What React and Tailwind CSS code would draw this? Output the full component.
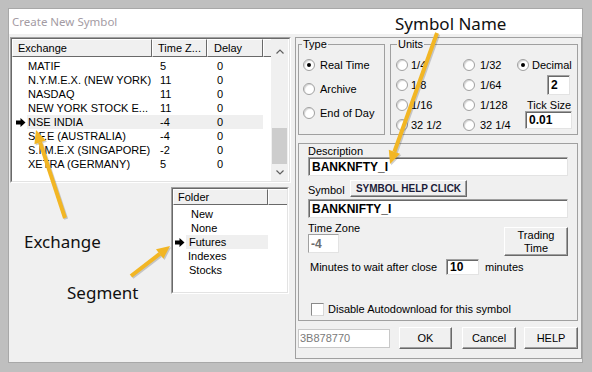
import React from 'react';

const exchanges = [
  ['MATIF', '5', '0'],
  ['N.Y.M.E.X. (NEW YORK)', '11', '0'],
  ['NASDAQ', '11', '0'],
  ['NEW YORK STOCK E...', '11', '0'],
  ['NSE INDIA', '-4', '0', true],
  ['S.F.E (AUSTRALIA)', '-4', '0'],
  ['S.I.M.E.X (SINGAPORE)', '-2', '0'],
  ['XETRA (GERMANY)', '5', '0'],
];

const folders = [
  ['New', 5],
  ['None', 5],
  ['Futures', 3, true],
  ['Indexes', 2],
  ['Stocks', 3],
];

function RowArrow() {
  return (
    <svg width="10" height="9" viewBox="0 0 10 9">
      <path d="M0 2.5 H4.5 V0 L9.5 4.5 L4.5 9 V6.5 H0 Z" fill="#000" />
    </svg>
  );
}

function Chevron({ down }) {
  return (
    <svg width="8" height="5" viewBox="0 0 8 5">
      <path d={down ? 'M0.5 0.5 L4 4 L7.5 0.5' : 'M0.5 4.5 L4 1 L7.5 4.5'} fill="none" stroke="#606060" strokeWidth="1.2" />
    </svg>
  );
}

function Radio({ on }) {
  return (
    <span className="w-[12px] h-[12px] rounded-full border border-[#a0a0a0] bg-white shadow-[inset_1px_1px_1px_#d4d4d4] flex items-center justify-center shrink-0">
      {on && <span className="w-[4px] h-[4px] rounded-full bg-black" />}
    </span>
  );
}

function RadioItem({ on, label, gap = 'gap-[5px]' }) {
  return (
    <div className={`flex items-center h-[16px] ${gap}`}>
      <Radio on={on} />
      <span className="leading-[13px] whitespace-nowrap">{label}</span>
    </div>
  );
}

function Button({ children, className = '' }) {
  return (
    <div className={`flex items-center justify-center bg-[#f0f0f0] border border-t-white border-l-white border-r-[#696969] border-b-[#696969] shadow-[inset_-1px_-1px_0_#a0a0a0] ${className}`}>
      {children}
    </div>
  );
}

function Field({ children, className = '' }) {
  return (
    <div className={`flex items-center bg-white border border-t-[#a0a0a0] border-l-[#a0a0a0] border-r-[#e3e3e3] border-b-[#e3e3e3] shadow-[inset_1px_1px_0_#696969] ${className}`}>
      {children}
    </div>
  );
}

function Arrow({ tail, base, head }) {
  const pts = head.map((p) => p.join(',')).join(' ');
  return (
    <g>
      <g transform="translate(1.2,1.2)" opacity="0.25">
        <line x1={tail[0]} y1={tail[1]} x2={base[0]} y2={base[1]} stroke="#444" strokeWidth="4" />
        <polygon points={pts} fill="#444" />
      </g>
      <line x1={tail[0]} y1={tail[1]} x2={base[0]} y2={base[1]} stroke="#f2b624" strokeWidth="4" />
      <polygon points={pts} fill="#f2b624" />
    </g>
  );
}

export default function App() {
  return (
    <div className="relative w-[592px] h-[372px] bg-[#bfbfbf] pl-[8px] pt-[8px] overflow-hidden text-[11px] text-black font-['Liberation_Sans',Arial,sans-serif]">
      <div className="w-[575px] h-[355px] bg-[#f0f0f0] border border-[#a8a8a8] flex flex-col">
        {/* title */}
        <div className="h-[25px] bg-white flex items-center pl-[3px] shrink-0">
          <span className="text-[11.5px] text-[#a39ba3] font-['Noto_Sans',sans-serif]">Create New Symbol</span>
        </div>

        <div className="flex flex-1">
          {/* left side */}
          <div className="w-[286px] flex flex-col">
            {/* exchange list */}
            <div className="ml-[1px] mt-[3px] w-[281px] h-[146px] border border-t-[#a0a0a0] border-l-[#a0a0a0] border-r-white border-b-white">
              <div className="w-full h-full border border-t-[#696969] border-l-[#696969] border-r-[#e3e3e3] border-b-[#e3e3e3] bg-white flex">
                <div className="w-[259px] flex flex-col">
                  <div className="flex h-[18px] shrink-0">
                    <div className="w-[140px] bg-[#f0f0f0] border-t border-l border-t-white border-l-white border-r border-b border-r-[#696969] border-b-[#696969] pl-[5px] leading-[16px]">Exchange</div>
                    <div className="w-[55px] bg-[#f0f0f0] border-t border-l border-t-white border-l-white border-r border-b border-r-[#696969] border-b-[#696969] pl-[5px] leading-[16px]">Time Z...</div>
                    <div className="w-[56px] bg-[#f0f0f0] border-t border-l border-t-white border-l-white border-r border-b border-r-[#696969] border-b-[#696969] pl-[6px] leading-[16px]">Delay</div>
                    <div className="flex-1 bg-[#f0f0f0] border-t border-l border-t-white border-l-white border-b border-b-[#696969]" />
                  </div>
                  <div className="pt-[2px] flex flex-col">
                    {exchanges.map(([name, tz, delay, sel]) => (
                      <div key={name} className="flex h-[14px] leading-[14px]">
                        <div className="w-[15px] flex items-center pl-[4px]">{sel && <RowArrow />}</div>
                        <div className={`flex w-[236px] ${sel ? 'bg-[#efefef]' : ''}`}>
                          <span className="w-[125px] pl-[1px] whitespace-nowrap">{name}</span>
                          <span className="w-[55px] pl-[8px]">{tz}</span>
                          <span className="w-[56px] pl-[10px]">{delay}</span>
                        </div>
                      </div>
                    ))}
                  </div>
                </div>
                {/* scrollbar */}
                <div className="w-[17px] bg-[#f0f0f0] flex flex-col">
                  <div className="h-[22px] flex items-end justify-center pb-[7px]"><Chevron /></div>
                  <div className="flex-1 px-[1px] pt-[67px]">
                    <div className="h-[36px] bg-[#cdcdcd]" />
                  </div>
                  <div className="h-[17px] flex items-center justify-center pb-[1px]"><Chevron down /></div>
                </div>
              </div>
            </div>

            {/* folder list */}
            <div className="ml-[162px] mt-[4px] w-[118px] h-[107px] border border-t-[#a0a0a0] border-l-[#a0a0a0] border-r-white border-b-white">
              <div className="w-full h-full border border-t-[#696969] border-l-[#696969] border-r-[#e3e3e3] border-b-[#e3e3e3] bg-white flex flex-col">
                <div className="flex h-[16px] shrink-0">
                  <div className="w-[95px] bg-[#f0f0f0] border-t border-l border-t-white border-l-white border-r border-b border-r-[#696969] border-b-[#696969] pl-[4px] leading-[14px]">Folder</div>
                  <div className="flex-1 bg-[#f0f0f0] border-t border-l border-t-white border-l-white border-b border-b-[#696969]" />
                </div>
                <div className="pt-[2px] flex flex-col">
                  {folders.map(([name, pad, sel]) => (
                    <div key={name} className="flex h-[14px] leading-[14px]">
                      <div className="w-[13px] flex items-center pl-[2px]">{sel && <RowArrow />}</div>
                      <div className={`w-[82px] ${sel ? 'bg-[#efefef]' : ''}`} style={{ paddingLeft: pad }}>{name}</div>
                    </div>
                  ))}
                </div>
              </div>
            </div>
          </div>

          {/* right frame */}
          <div className="mt-[3px] w-[287px] h-[322px] border border-[#a0a0a0] pl-[2px] pr-[3px] flex flex-col">
            <div className="flex gap-[5px] h-[97px] shrink-0">
              <fieldset className="w-[87px] h-[97px] border border-[#a0a0a0]">
                <legend className="ml-[3px] px-[1px] leading-[12px]">Type</legend>
                <div className="pl-[4px] pt-[7px] flex flex-col gap-[8px]">
                  <RadioItem on label="Real Time" />
                  <RadioItem label="Archive" />
                  <RadioItem label="End of Day" />
                </div>
              </fieldset>
              <fieldset className="w-[188px] h-[97px] border border-[#a0a0a0]">
                <legend className="ml-[6px] px-[1px] leading-[12px]">Units</legend>
                <div className="flex pl-[5px]">
                  <div className="w-[67px] pt-[7px] flex flex-col gap-[4px]">
                    <RadioItem label="1/4" gap="gap-[3px]" />
                    <RadioItem label="1/8" gap="gap-[3px]" />
                    <RadioItem label="1/16" gap="gap-[3px]" />
                    <RadioItem label="32 1/2" gap="gap-[3px]" />
                  </div>
                  <div className="w-[54px] pt-[7px] flex flex-col gap-[4px]">
                    <RadioItem label="1/32" />
                    <RadioItem label="1/64" />
                    <RadioItem label="1/128" />
                    <RadioItem label="32 1/4" />
                  </div>
                  <div className="flex-1 pt-[7px] flex flex-col">
                    <RadioItem on label="Decimal" gap="gap-[3px]" />
                    <Field className="ml-[30px] mt-[2px] w-[23px] h-[20px] pl-[3px] font-bold text-[12px]">2</Field>
                    <div className="ml-[10px] mt-[4px] leading-[12px] h-[12px]">Tick Size</div>
                    <Field className="ml-[8px] w-[47px] h-[18px] pl-[3px] font-bold text-[12px]">0.01</Field>
                  </div>
                </div>
              </fieldset>
            </div>

            {/* details group */}
            <div className="mt-[8px] h-[178px] border border-[#a0a0a0] px-[9px] flex flex-col shrink-0">
              <div className="mt-[1px] h-[12px] leading-[12px]">Description</div>
              <Field className="h-[19px] pl-[3px] font-bold text-[12px]">BANKNFTY_I</Field>
              <div className="mt-[4px] h-[17px] flex">
                <span className="w-[42px] self-end leading-[13px]">Symbol</span>
                <Button className="w-[117px] h-[17px] font-bold text-[10px] whitespace-nowrap text-[#1c1c38]">SYMBOL HELP CLICK</Button>
              </div>
              <Field className="mt-[2px] h-[19px] pl-[3px] font-bold text-[12px]">BANKNIFTY_I</Field>
              <div className="mt-[4px] flex justify-between">
                <div className="flex flex-col">
                  <span className="h-[12px] leading-[12px]">Time Zone</span>
                  <div className="w-[31px] h-[19px] bg-white border border-t-[#a0a0a0] border-l-[#a0a0a0] border-r-[#e3e3e3] border-b-[#e3e3e3] flex items-center pl-[2px] text-[#6d6d6d] font-bold text-[12px]">-4</div>
                </div>
                <Button className="mt-[5px] w-[64px] h-[29px] flex-col leading-[13px]">
                  <span>Trading</span>
                  <span>Time</span>
                </Button>
              </div>
              <div className="mt-[3px] h-[16px] flex items-center ml-[2px]">
                <span className="w-[136px] whitespace-nowrap">Minutes to wait after close</span>
                <Field className="w-[33px] h-[16px] pl-[3px] font-bold text-[12px]">10</Field>
                <span className="ml-[6px]">minutes</span>
              </div>
              <div className="mt-[28px] h-[13px] flex items-center ml-[3px] gap-[4px]">
                <span className="w-[13px] h-[13px] bg-white border border-t-[#8a8a8a] border-l-[#8a8a8a] border-r-[#d8d8d8] border-b-[#d8d8d8] shrink-0" />
                <span>Disable Autodownload for this symbol</span>
              </div>
            </div>

            {/* bottom buttons */}
            <div className="mt-[6px] h-[22px] flex items-center">
              <div className="w-[92px] h-[19px] bg-white border border-[#c8c8c8] pl-[1px] flex items-center text-[#7a7a7a]">3B878770</div>
              <Button className="ml-[9px] w-[53px] h-[22px]">OK</Button>
              <Button className="ml-[10px] w-[54px] h-[22px]">Cancel</Button>
              <Button className="ml-[8px] w-[54px] h-[22px]">HELP</Button>
            </div>
          </div>
        </div>
      </div>

      {/* annotations */}
      <div className="absolute left-[395px] top-[15px] text-[17px] leading-[17px] text-[#111] font-['Noto_Sans',sans-serif] whitespace-nowrap">Symbol Name</div>
      <div className="absolute left-[24px] top-[233px] text-[17px] leading-[17px] text-[#111] font-['Noto_Sans',sans-serif]">Exchange</div>
      <div className="absolute left-[67px] top-[284px] text-[17px] leading-[17px] text-[#111] font-['Noto_Sans',sans-serif]">Segment</div>
      <svg className="absolute left-0 top-0 pointer-events-none" width="592" height="372">
        <Arrow tail={[437, 33]} base={[394.4, 151.8]} head={[[390, 164], [400, 153.8], [388.8, 149.7]]} />
        <Arrow tail={[65, 218]} base={[40.1, 142.4]} head={[[36, 130], [45.8, 140.5], [34.4, 144.2]]} />
        <Arrow tail={[131, 276]} base={[159.7, 253.9]} head={[[170, 246], [163.4, 258.7], [156, 249.2]]} />
      </svg>
    </div>
  );
}
